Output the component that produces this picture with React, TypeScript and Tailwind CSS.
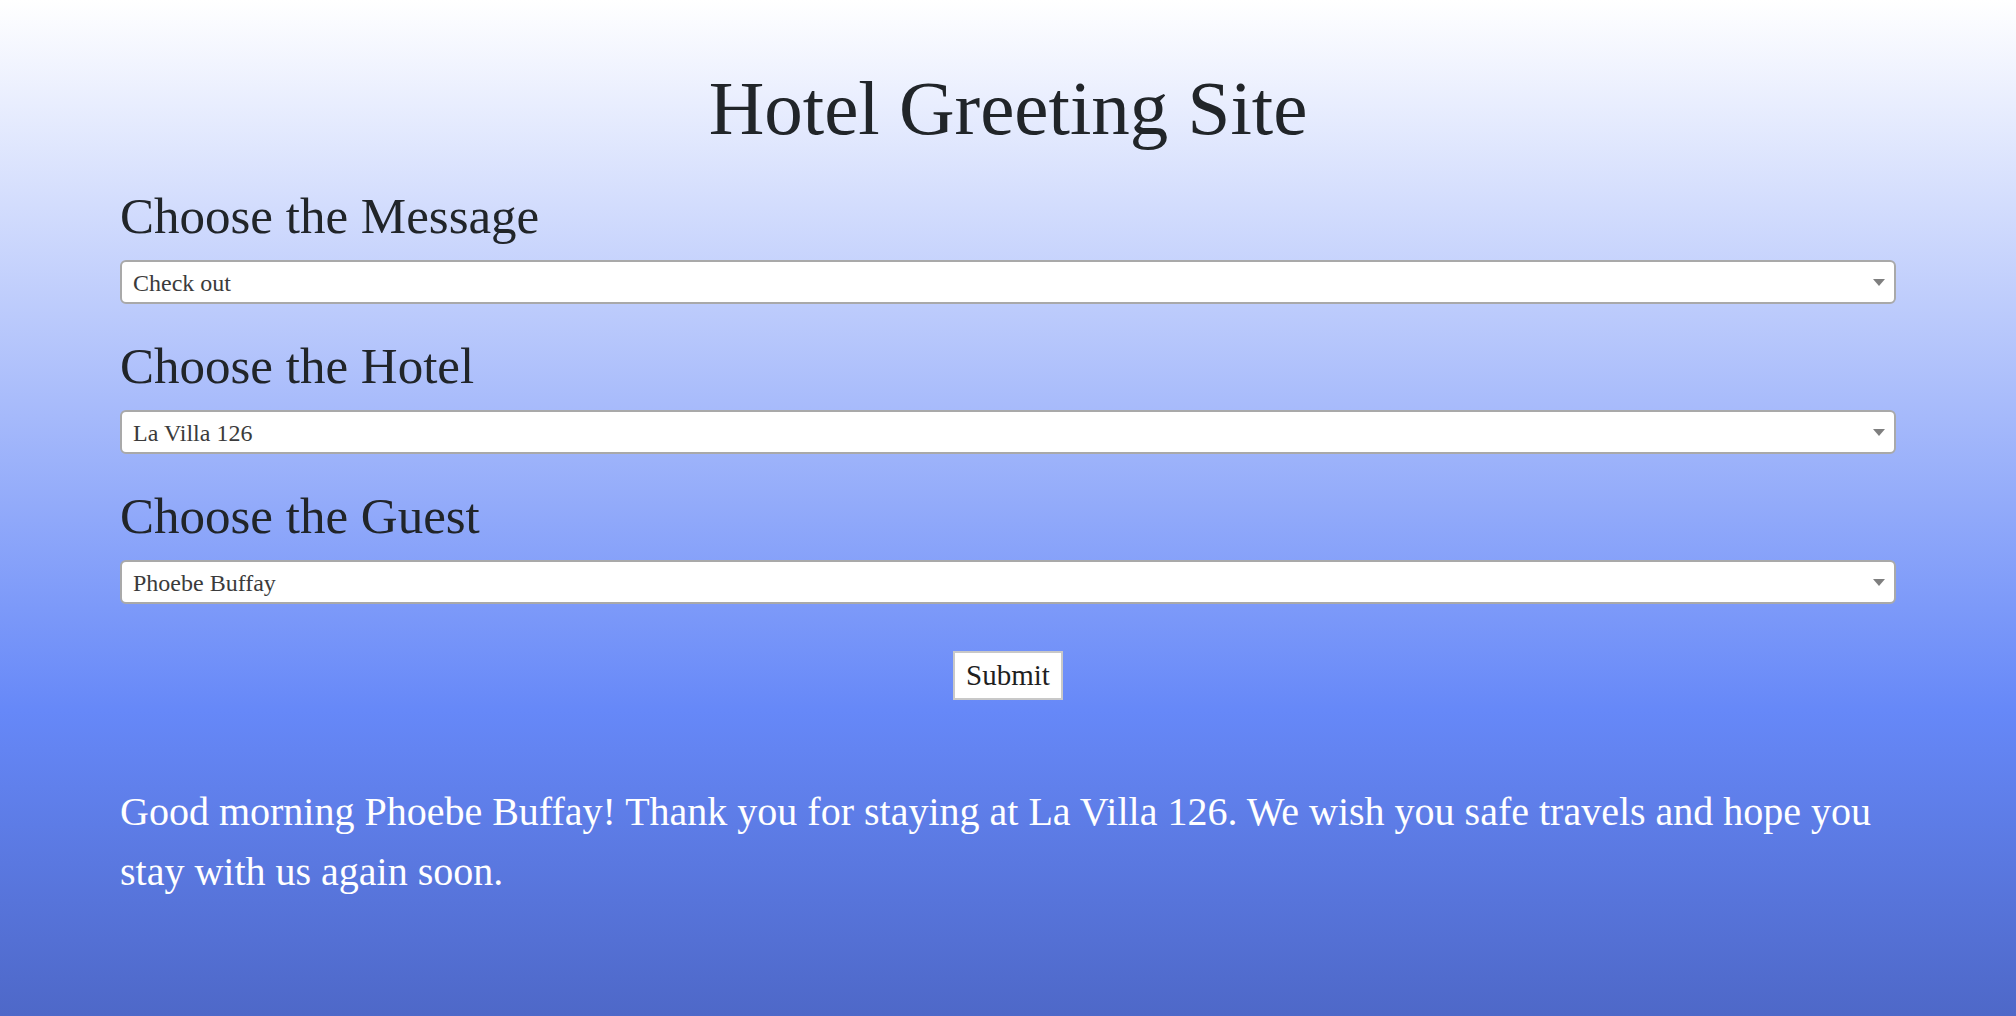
import { useState } from 'react'

const serif = "font-['Liberation_Serif','Times_New_Roman',serif]"

interface PickerProps {
  label: string
  value: string
  options: string[]
  onChange: (v: string) => void
}

function Picker({ label, value, options, onChange }: PickerProps) {
  return (
    <div className="flex flex-col">
      <h3 className={`${serif} mt-[32px] text-[51px] leading-[60px] font-normal text-[#212529]`}>{label}</h3>
      <div className="relative mt-[14px] h-[44px]">
        <select
          value={value}
          onChange={(e) => onChange(e.target.value)}
          className={`${serif} h-full w-full appearance-none rounded-[6px] border-2 border-[#a9a9a9] bg-white pl-[11px] pt-[2px] text-[24px] text-[#3b3b3b] outline-none`}
        >
          {options.map((o) => (
            <option key={o}>{o}</option>
          ))}
        </select>
        <svg
          className="pointer-events-none absolute right-[11px] top-[19px]"
          width="12"
          height="7"
          viewBox="0 0 12 7"
        >
          <path d="M0 0H12L6 7Z" fill="#7f7f7f" />
        </svg>
      </div>
    </div>
  )
}

export default function App() {
  const [message, setMessage] = useState('Check out')
  const [hotel, setHotel] = useState('La Villa 126')
  const [guest, setGuest] = useState('Phoebe Buffay')

  const greeting = `Good morning ${guest}! Thank you for staying at ${hotel}. We wish you safe travels and hope you stay with us again soon.`

  return (
    <div className="min-h-screen bg-[linear-gradient(to_bottom,#ffffff_0%,#6688f8_70%,#4e68c8_100%)] pt-[62px]">
      <div className="mx-[120px] flex flex-col">
        <h1 className={`${serif} text-center text-[77px] leading-[92px] font-normal text-[#212529]`}>
          Hotel Greeting Site
        </h1>

        <Picker
          label="Choose the Message"
          value={message}
          options={['Check in', 'Check out']}
          onChange={setMessage}
        />
        <Picker
          label="Choose the Hotel"
          value={hotel}
          options={['La Villa 126', 'Grand Plaza']}
          onChange={setHotel}
        />
        <Picker
          label="Choose the Guest"
          value={guest}
          options={['Phoebe Buffay', 'Ross Geller']}
          onChange={setGuest}
        />

        <div className="mt-[47px] flex justify-center">
          <button
            className={`${serif} h-[49px] w-[110px] border-2 border-[#c8c8c8] bg-white text-[29px] leading-none text-[#1f1f1f]`}
          >
            Submit
          </button>
        </div>

        <p className={`${serif} mt-[82px] text-[40px] leading-[60px] text-white`}>{greeting}</p>
      </div>
    </div>
  )
}
